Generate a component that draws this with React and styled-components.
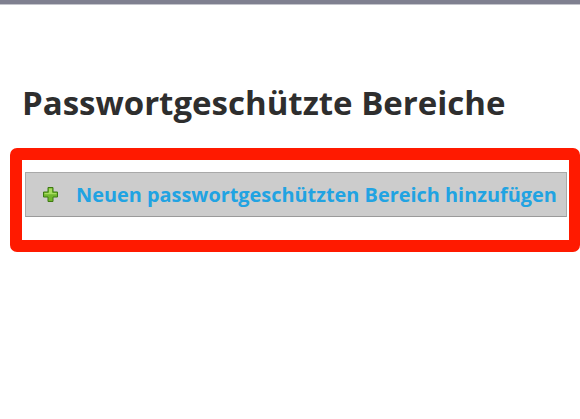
import React from "react";
import styled, { createGlobalStyle } from "styled-components";

const GlobalStyle = createGlobalStyle`
  body {
    margin: 0;
    background: #ffffff;
    font-family: "Open Sans", "Liberation Sans", sans-serif;
  }
`;

const Page = styled.div`
  display: flex;
  flex-direction: column;
  width: 580px;
  height: 419px;
  overflow: hidden;
`;

const TopBar = styled.div`
  height: 4px;
  background: #7f8090;
  border-bottom: 1px solid #c4c5cc;
`;

const Content = styled.div`
  display: flex;
  flex-direction: column;
  padding: 0 0 0 10px;
`;

const Title = styled.h1`
  margin: 78px 0 0 12px;
  font-size: 33px;
  font-weight: bold;
  line-height: 40px;
  color: #2e2e2e;
  white-space: nowrap;
`;

const Highlight = styled.div`
  display: flex;
  margin-top: 25px;
  padding: 12px 2px 23px 3px;
  border: 12px solid #ff1a00;
  border-right-width: 11px;
  border-radius: 7px;
`;

const AddButton = styled.div`
  display: flex;
  align-items: center;
  gap: 18px;
  flex: 1;
  height: 43px;
  padding-left: 17px;
  background: #cccccc;
  border: 1px solid #a9a9a9;
  border-bottom-color: #9a9a9a;
  font-size: 19.9px;
  font-weight: bold;
  color: #21a3e2;
  white-space: nowrap;
`;

const PlusIcon = () => (
  <svg width="15" height="15" viewBox="0 0 15 15">
    <path
      d="M5 0.5h5v4.5h4.5v5h-4.5v4.5h-5v-4.5h-4.5v-5h4.5z"
      fill="#72b72e"
      stroke="#3d7a10"
      strokeWidth="1"
    />
    <path d="M6 1.5h3v4.5h4.5v1.2h-12v-1.2h4.5z" fill="#a8dc60" />
  </svg>
);

export default function App() {
  return (
    <Page>
      <GlobalStyle />
      <TopBar />
      <Content>
        <Title>Passwortgeschützte Bereiche</Title>
        <Highlight>
          <AddButton>
            <PlusIcon />
            Neuen passwortgeschützten Bereich hinzufügen
          </AddButton>
        </Highlight>
      </Content>
    </Page>
  );
}
